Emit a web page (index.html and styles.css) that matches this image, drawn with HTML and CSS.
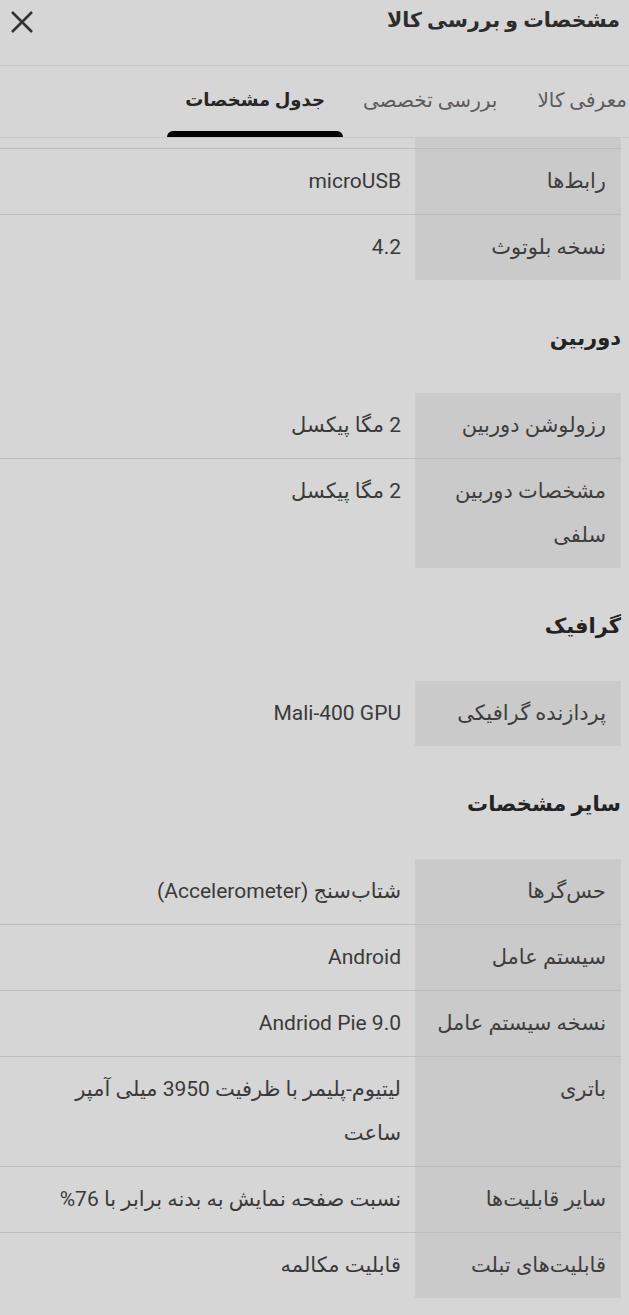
FILE: index.html
```html
<!DOCTYPE html>
<html lang="fa" dir="rtl">
<head>
<meta charset="utf-8">
<title>مشخصات و بررسی کالا</title>
<link rel="stylesheet" href="styles.css">
</head>
<body>
<div class="sheet">
  <header class="topbar">
    <h1 class="title">مشخصات و بررسی کالا</h1>
    <button class="close" aria-label="بستن">
      <svg width="24" height="24" viewBox="0 0 24 24"><path d="M2 2 L22 22 M22 2 L2 22" stroke="#333" stroke-width="2.6" fill="none"/></svg>
    </button>
  </header>
  <nav class="tabs">
    <div class="tab-list">
      <span class="tab">معرفی کالا</span>
      <span class="tab">بررسی تخصصی</span>
      <span class="tab active">جدول مشخصات</span>
    </div>
  </nav>
  <main class="specs">
    <section class="group">
      <div class="row stub"><div class="label"></div><div class="value"></div></div>
      <div class="row"><div class="label">رابط‌ها</div><div class="value">microUSB</div></div>
      <div class="row"><div class="label">نسخه بلوتوث</div><div class="value">4.2</div></div>
    </section>
    <section class="group">
      <h2 class="group-title">دوربین</h2>
      <div class="row"><div class="label">رزولوشن دوربین</div><div class="value">2 مگا پیکسل</div></div>
      <div class="row"><div class="label">مشخصات دوربین سلفی</div><div class="value">2 مگا پیکسل</div></div>
    </section>
    <section class="group">
      <h2 class="group-title">گرافیک</h2>
      <div class="row"><div class="label">پردازنده گرافیکی</div><div class="value" dir="ltr">Mali-400 GPU</div></div>
    </section>
    <section class="group">
      <h2 class="group-title">سایر مشخصات</h2>
      <div class="row"><div class="label">حس‌گرها</div><div class="value">شتاب‌سنج (Accelerometer)</div></div>
      <div class="row"><div class="label">سیستم عامل</div><div class="value">Android</div></div>
      <div class="row"><div class="label">نسخه سیستم عامل</div><div class="value" dir="ltr">Andriod Pie 9.0</div></div>
      <div class="row"><div class="label">باتری</div><div class="value">لیتیوم-پلیمر با ظرفیت 3950 میلی آمپر ساعت</div></div>
      <div class="row"><div class="label">سایر قابلیت‌ها</div><div class="value">نسبت صفحه نمایش به بدنه برابر با 76%</div></div>
      <div class="row"><div class="label">قابلیت‌های تبلت</div><div class="value">قابلیت مکالمه</div></div>
    </section>
  </main>
</div>
</body>
</html>
```

FILE: styles.css
```css
html, body {
  margin: 0;
  padding: 0;
  background: #d6d6d6;
}
body {
  font-family: Roboto, "DejaVu Sans", sans-serif;
  color: #3c3c3c;
}
.sheet {
  width: 629px;
  overflow: hidden;
}
.topbar {
  height: 66px;
  display: flex;
  align-items: flex-start;
  justify-content: space-between;
  border-bottom: 1px solid #c8c8c8;
  box-sizing: border-box;
  padding: 0 9px 0 10px;
}
.title {
  margin: 0;
  padding-top: 5px;
  font-size: 20.5px;
  font-weight: 700;
  line-height: 30px;
  color: #2c2c2c;
}
.close {
  background: none;
  border: 0;
  padding: 0;
  margin-top: 10px;
  width: 24px;
  height: 24px;
  display: flex;
}
.tabs {
  height: 72px;
  border-bottom: 1px solid #c8c8c8;
  box-sizing: border-box;
  overflow: hidden;
}
.tab-list {
  display: flex;
  margin-right: -18px;
  height: 100%;
}
.tab {
  position: relative;
  padding: 0 20px 4px;
  display: flex;
  align-items: center;
  font-size: 20px;
  color: #5c5c5c;
  white-space: nowrap;
}
.tab.active {
  color: #262626;
  font-weight: 700;
  font-size: 18px;
  padding: 0 18px 4px 18px;
}
.tab.active::after {
  content: "";
  position: absolute;
  left: 0;
  right: 0;
  bottom: 0;
  height: 6px;
  background: #050505;
  border-radius: 6px 6px 0 0;
}
.group-title {
  margin: 0;
  padding: 43px 8px 40px 0;
  font-size: 21px;
  line-height: 30px;
  font-weight: 700;
  color: #232323;
}
.row {
  display: flex;
  margin-right: 8px;
  border-bottom: 1px solid #bdbdbd;
  font-size: 21px;
  line-height: 44px;
}
.group .row:last-child {
  border-bottom: 0;
}
.label {
  width: 206px;
  flex: none;
  box-sizing: border-box;
  background: #cacaca;
  padding: 10px 15px 11px 8px;
  color: #3e3e3e;
}
.value {
  flex: 1;
  padding: 10px 14px 11px 20px;
  color: #3a3a3a;
  text-align: right;
}
.row.stub {
  line-height: 0;
}
.row.stub .label, .row.stub .value {
  padding: 0;
  height: 10px;
}
```
